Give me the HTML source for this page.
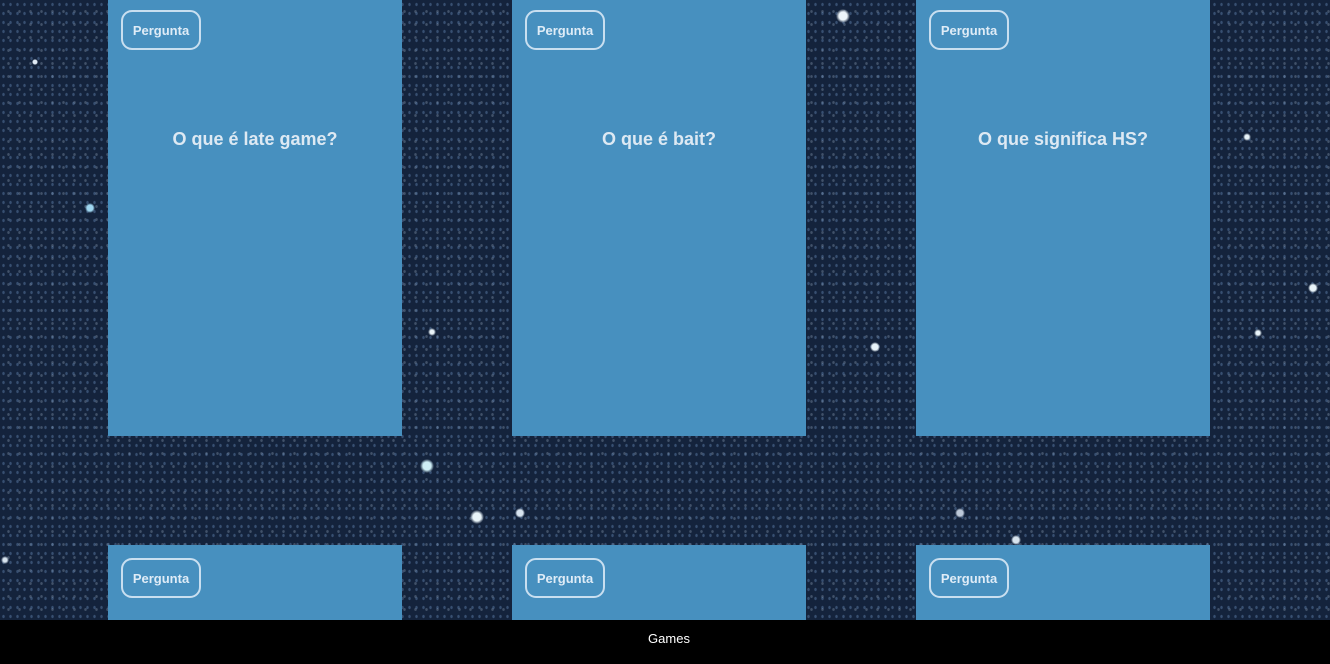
<!DOCTYPE html>
<html><head><meta charset="utf-8"><style>
*{margin:0;padding:0;box-sizing:border-box}
html,body{width:1330px;height:664px;overflow:hidden}
body{position:relative;font-family:"Liberation Sans",sans-serif;
background-color:#14233c;
background-image:
radial-gradient(circle at 35px 62px,#dfeaf5 2px,transparent 3px),
radial-gradient(circle at 90px 208px,#9fd6f0 3px,transparent 5px),
radial-gradient(circle at 843px 16px,#eef5fa 4px,transparent 7px),
radial-gradient(circle at 427px 466px,#cfeef5 4px,transparent 7px),
radial-gradient(circle at 477px 517px,#e8f3f8 4px,transparent 7px),
radial-gradient(circle at 520px 513px,#d7e3ee 3px,transparent 5px),
radial-gradient(circle at 875px 347px,#e8f3f8 3px,transparent 5px),
radial-gradient(circle at 1313px 288px,#e8f3f8 3px,transparent 5px),
radial-gradient(circle at 1247px 137px,#e8f3f8 2px,transparent 4px),
radial-gradient(circle at 432px 332px,#e8f3f8 2px,transparent 4px),
radial-gradient(circle at 1258px 333px,#e8f3f8 2px,transparent 4px),
radial-gradient(circle at 960px 513px,#bcc8d8 3px,transparent 5px),
radial-gradient(circle at 1016px 540px,#d7e3ee 3px,transparent 5px),
radial-gradient(circle at 5px 560px,#d7e3ee 2px,transparent 4px),
radial-gradient(rgba(120,160,210,.35) 1px,transparent 1.5px),
radial-gradient(rgba(200,220,240,.25) 1px,transparent 1.5px);
background-size:auto,auto,auto,auto,auto,auto,auto,auto,auto,auto,auto,auto,auto,auto,7px 9px,11px 13px;
background-position:0 0,0 0,0 0,0 0,0 0,0 0,0 0,0 0,0 0,0 0,0 0,0 0,0 0,0 0,0 0,3px 5px;
}
.card{position:absolute;width:294px;background:#4790bf}
.btn{position:absolute;left:13px;top:10px;width:80px;height:40px;border:2px solid #c9dff0;border-radius:11px;color:#dfecf7;font-weight:bold;font-size:13px;display:flex;align-items:center;justify-content:center}
.q{position:absolute;left:0;right:0;top:129px;text-align:center;color:#dde9f3;font-size:18px;font-weight:bold}
.foot{position:absolute;left:4px;top:620px;width:1330px;height:44px;background:#000;color:#fff;font-size:13px;text-align:center;line-height:37px}
</style></head><body>
<div class="card" style="left:108px;top:0;height:436px"><div class="btn">Pergunta</div><div class="q">O que é late game?</div></div>
<div class="card" style="left:512px;top:0;height:436px"><div class="btn">Pergunta</div><div class="q">O que é bait?</div></div>
<div class="card" style="left:916px;top:0;height:436px"><div class="btn">Pergunta</div><div class="q">O que significa HS?</div></div>
<div class="card" style="left:108px;top:545px;height:75px;overflow:hidden"><div class="btn" style="top:13px">Pergunta</div></div>
<div class="card" style="left:512px;top:545px;height:75px;overflow:hidden"><div class="btn" style="top:13px">Pergunta</div></div>
<div class="card" style="left:916px;top:545px;height:75px;overflow:hidden"><div class="btn" style="top:13px">Pergunta</div></div>
<div style="position:absolute;left:0;top:620px;width:1330px;height:44px;background:#000"></div>
<div class="foot" style="background:transparent">Games</div>
</body></html>
